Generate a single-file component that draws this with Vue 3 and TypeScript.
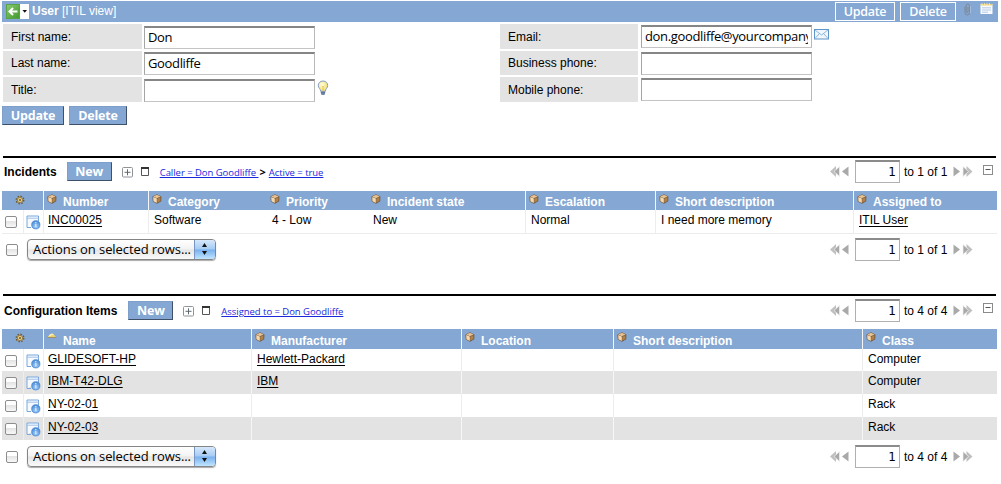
<script setup lang="ts">
interface Column {
  label: string
  icon: string
  divided: boolean
}

interface Cell {
  text: string
  link?: boolean
}

interface RelatedList {
  key: string
  title: string
  filters: string[]
  range: string
  columns: Column[]
  rows: Cell[][]
}

interface Field {
  label: string
  value: string
  icon?: string
}

const fieldColumns: { side: string; fields: Field[] }[] = [
  {
    side: 'left',
    fields: [
      { label: 'First name:', value: 'Don' },
      { label: 'Last name:', value: 'Goodliffe' },
      { label: 'Title:', value: '', icon: 'bulb' },
    ],
  },
  {
    side: 'right',
    fields: [
      { label: 'Email:', value: 'don.goodliffe@yourcompany', icon: 'mail' },
      { label: 'Business phone:', value: '' },
      { label: 'Mobile phone:', value: '' },
    ],
  },
]

const col = (label: string, divided = true, icon = 'cube'): Column => ({ label, icon, divided })

const lists: RelatedList[] = [
  {
    key: 'incidents',
    title: 'Incidents',
    filters: ['Caller = Don Goodliffe', 'Active = true'],
    range: 'to 1 of 1',
    columns: [
      col('Number'),
      col('Category'),
      col('Priority', false),
      col('Incident state', false),
      col('Escalation'),
      col('Short description'),
      col('Assigned to'),
    ],
    rows: [
      [
        { text: 'INC00025', link: true },
        { text: 'Software' },
        { text: '4 - Low' },
        { text: 'New' },
        { text: 'Normal' },
        { text: 'I need more memory' },
        { text: 'ITIL User', link: true },
      ],
    ],
  },
  {
    key: 'config',
    title: 'Configuration Items',
    filters: ['Assigned to = Don Goodliffe'],
    range: 'to 4 of 4',
    columns: [
      col('Name', true, 'sort'),
      col('Manufacturer'),
      col('Location'),
      col('Short description'),
      col('Class'),
    ],
    rows: [
      ['GLIDESOFT-HP', 'Hewlett-Packard', 'Computer'],
      ['IBM-T42-DLG', 'IBM', 'Computer'],
      ['NY-02-01', '', 'Rack'],
      ['NY-02-03', '', 'Rack'],
    ].map(([name, maker, kind]) => [
      { text: name, link: true },
      { text: maker, link: true },
      { text: '' },
      { text: '' },
      { text: kind },
    ]),
  },
]
</script>

<template>
  <svg class="defs" width="0" height="0" aria-hidden="true">
    <defs>
      <linearGradient id="green" x1="0" y1="0" x2="1" y2="1">
        <stop offset="0" stop-color="#8ccb73" />
        <stop offset="1" stop-color="#3f9829" />
      </linearGradient>
      <radialGradient id="glow" cx=".4" cy=".35" r=".7">
        <stop offset="0" stop-color="#fffde0" />
        <stop offset="1" stop-color="#f3dc62" />
      </radialGradient>
      <radialGradient id="ball" cx=".5" cy=".7" r=".7">
        <stop offset="0" stop-color="#a4d0f8" />
        <stop offset="1" stop-color="#4486d6" />
      </radialGradient>
    </defs>
    <symbol id="cube" viewBox="0 0 10 10">
      <path d="M5 .3 9.4 2.4 9.2 7.3 5 9.7 .8 7.5 .5 2.5Z" fill="#6b5540" />
      <path d="M5 .7 8.7 2.4 4.8 4.3 1.1 2.6Z" fill="#e6c091" />
      <path d="M1.2 3 4.8 4.6V9L1.4 7.2Z" fill="#f5d8ad" />
      <path d="M5.2 4.7 8.5 3.1V7L5.2 8.8Z" fill="#b08049" />
    </symbol>
    <symbol id="sort" viewBox="0 0 10 10">
      <path d="M.6 5.2Q4.8-1.1 9.2 5.2Z" fill="#f2d774" />
      <path d="M1.2 4.4Q4.6-.4 7 2.5Q4 2.4 2.8 4.6Z" fill="#fff3bb" />
      <path d="M.5 5.4H9.3" stroke="#9f8445" stroke-width=".8" />
    </symbol>
    <symbol id="gear" viewBox="0 0 10 10">
      <circle cx="5" cy="5" r="3.7" fill="none" stroke="#6f5b2d" stroke-width="1.5" stroke-dasharray="1.5 1.406" />
      <circle cx="5" cy="5" r="2.7" fill="#e3c67f" stroke="#8b7037" stroke-width=".8" />
      <circle cx="5" cy="5" r="1" fill="#6d5a35" />
    </symbol>
    <symbol id="record" viewBox="0 0 15 15">
      <path d="M1 12.5V1H12.5V6" fill="#f6faff" stroke="#79a6dc" />
      <path d="M1 3.2H12.5" stroke="#9dc0e8" />
      <path d="M1 12.5H5" stroke="#79a6dc" />
      <circle cx="9.8" cy="9.8" r="4.1" fill="url(#ball)" stroke="#4685d0" stroke-width=".8" />
      <path d="M9.8 7V8.2M9.8 9V12.2" stroke="#d5eaff" stroke-width="1.2" />
    </symbol>
    <symbol id="bulb" viewBox="0 0 12 16">
      <path d="M6 1C3 1 1.3 3.1 1.3 5.5C1.3 8 3.5 8.7 3.7 11.3H8.3C8.5 8.7 10.7 8 10.7 5.5C10.7 3.1 9 1 6 1Z" fill="url(#glow)" stroke="#849dc7" />
      <path d="M4.8 6.2 6 7.2 7.2 6.2M6 7.2V10.5" fill="none" stroke="#e3bd55" stroke-width=".8" />
      <path d="M3.9 11.2H8.1V13.7L7 15H5L3.9 13.7Z" fill="#8799b4" />
      <path d="M3.8 12.4H8.2M4.2 14H7.8" stroke="#4b6288" stroke-width=".7" />
    </symbol>
    <symbol id="mail" viewBox="0 0 15 11">
      <rect x=".5" y=".5" width="14" height="9.5" fill="#eff6fd" stroke="#5f94c9" />
      <path d="M1 1 7.5 6 14 1M1 9.5 5.3 4.7M14 9.5 9.7 4.7" fill="none" stroke="#82afd9" stroke-width=".9" />
    </symbol>
    <symbol id="prev" viewBox="0 0 20 11">
      <path d="M6 0V11L0 5.5Z" fill="#c0c0c0" />
      <path d="M9.5 .5V10.5L4 5.5Z" fill="#a9a9a9" stroke="#f2f2f2" stroke-width=".7" />
      <path d="M18.5 .5V10.5L12 5.5Z" fill="#a9a9a9" />
    </symbol>
    <symbol id="next" viewBox="0 0 20 11">
      <path d="M.5 .5V10.5L7 5.5Z" fill="#a9a9a9" />
      <path d="M13.5 0V11L19.5 5.5Z" fill="#c0c0c0" />
      <path d="M10 .5V10.5L15.5 5.5Z" fill="#a9a9a9" stroke="#f2f2f2" stroke-width=".7" />
    </symbol>
  </svg>

  <main class="page">
    <header class="bar">
      <svg class="back" width="23" height="15" viewBox="0 0 23 15">
        <rect width="23" height="15" fill="#fff" />
        <rect x=".5" y=".5" width="13" height="14" fill="url(#green)" stroke="#58a445" />
        <path d="M11.5 7.5H4M7 4 3.5 7.5 7 11" fill="none" stroke="#fff" stroke-width="2" />
        <path d="M16.5 6H21L18.75 8.7Z" fill="#111" />
      </svg>
      <h1>User <span>[ITIL view]</span></h1>
      <div class="bar-tools">
        <button class="outline update">Update</button>
        <button class="outline delete">Delete</button>
        <svg class="clip" width="9" height="13" viewBox="0 0 9 13">
          <path d="M2 3.5V9.5Q2.1 12 4.3 12T6.5 9.5V3Q6.4 1 4.7 1T3.2 3V8.5Q3.3 9.5 4.2 9.5T5 8.5V4" fill="none" stroke="#7d8896" />
          <path d="M7.4 3V10" stroke="#b7c9df" stroke-width=".7" />
        </svg>
        <svg class="note" width="13" height="12" viewBox="0 0 13 12">
          <rect x=".5" y="1" width="12" height="10" fill="#f7fbff" />
          <path d="M.5 1.7H12.5" stroke="#e8cf7a" stroke-width="1.5" />
          <path d="M2 0V2.5M4.5 0V2.5M7 0V2.5M9.5 0V2.5" stroke="#fff1ae" stroke-width=".7" />
          <path d="M2 4.8H11M2 7H11M2 9.2H8" stroke="#a5bddd" stroke-width=".8" />
        </svg>
      </div>
    </header>

    <form class="fields" @submit.prevent>
      <div v-for="group in fieldColumns" :key="group.side" class="group" :class="group.side">
        <div v-for="field in group.fields" :key="field.label" class="field">
          <label>{{ field.label }}</label>
          <div class="input lucida"><span>{{ field.value }}</span></div>
          <svg v-if="field.icon" :class="field.icon"><use :href="'#' + field.icon" /></svg>
        </div>
      </div>
    </form>
    <div class="form-actions">
      <button class="solid update">Update</button>
      <button class="solid delete">Delete</button>
    </div>

    <section v-for="list in lists" :key="list.key" class="list" :class="list.key">
      <div class="list-head">
        <h2>{{ list.title }}</h2>
        <button class="solid new">New</button>
        <svg class="expand" width="11" height="11" viewBox="0 0 11 11">
          <rect x=".5" y=".5" width="10" height="9.5" rx="1" fill="#fff" stroke="#8f9499" />
          <path d="M2.5 5.3H8.5M5.5 2.3V8.3" stroke="#5e6872" />
        </svg>
        <svg class="window" width="8" height="9" viewBox="0 0 8 9">
          <path d="M.5 1V8.5H7.5V1" fill="#fff" stroke="#555" />
          <path d="M0 1H8" stroke="#333" stroke-width="2" />
        </svg>
        <div class="crumbs lucida">
          <template v-for="(filter, i) in list.filters" :key="filter">
            <b v-if="i > 0">&gt;</b><a>{{ filter }}<template v-if="i < list.filters.length - 1">&nbsp;</template></a>
          </template>
        </div>
        <div class="pager">
          <svg width="20" height="11"><use href="#prev" /></svg>
          <div class="page-no">1</div>
          <span>{{ list.range }}</span>
          <svg width="20" height="11"><use href="#next" /></svg>
        </div>
        <svg class="collapse" width="10" height="10" viewBox="0 0 10 10">
          <rect x=".5" y=".5" width="9" height="9" fill="#fff" stroke="#8b8b8b" />
          <path d="M2.5 4.5H7.5" stroke="#555" />
        </svg>
      </div>

      <div class="table">
        <div class="tr th">
          <div class="gear"><svg width="10" height="10"><use href="#gear" /></svg></div>
          <div v-for="column in list.columns" :key="column.label" class="cell" :class="{ divided: column.divided }">
            <svg width="10" height="10"><use :href="'#' + column.icon" /></svg>
            <span>{{ column.label }}</span>
          </div>
        </div>
        <div v-for="(row, r) in list.rows" :key="r" class="tr td">
          <div class="pick"><i class="check"></i></div>
          <div class="open"><svg width="15" height="15"><use href="#record" /></svg></div>
          <div v-for="(cell, c) in row" :key="c" class="cell" :class="{ divided: list.columns[c].divided, first: c === 0 }">
            <span :class="{ link: cell.link && cell.text }">{{ cell.text }}</span>
          </div>
        </div>
      </div>

      <div class="list-foot">
        <i class="check"></i>
        <div class="select lucida">
          <span>Actions on selected rows...</span>
          <div class="arrows">
            <svg width="7" height="12" viewBox="0 0 7 12">
              <path d="M3.5 0 6 4H1ZM3.5 12 6 8H1Z" fill="#111" />
            </svg>
          </div>
        </div>
        <div class="pager">
          <svg width="20" height="11"><use href="#prev" /></svg>
          <div class="page-no">1</div>
          <span>{{ list.range }}</span>
          <svg width="20" height="11"><use href="#next" /></svg>
        </div>
      </div>
    </section>
  </main>
</template>

<style>
body {
  margin: 0;
  background: #fff;
}
</style>

<style scoped>
.defs {
  position: absolute;
}
.page,
.page * {
  box-sizing: border-box;
}
.page {
  width: 1001px;
  height: 484px;
  padding-top: 1px;
  overflow: hidden;
  color: #000;
  font: 12px/14px 'Liberation Sans', Arial, sans-serif;
}
.page svg {
  display: block;
  flex: none;
}
.lucida,
button {
  font-family: 'Open Sans', 'Noto Sans', sans-serif;
}
h1,
h2 {
  margin: 0;
  font-size: 12px;
  line-height: 14px;
  font-weight: bold;
}
button {
  flex: none;
  margin: 0;
  padding: 0;
  color: #fff;
  font-size: 12.5px;
  line-height: 15px;
  letter-spacing: -0.2px;
  background: #84a7d3;
}

/* title bar */
.bar {
  display: flex;
  width: 996px;
  height: 21px;
  margin-left: 2px;
  background: #84a7d3;
}
.back {
  margin: 3px 0 0 4px;
}
h1 {
  margin: 3px 0 0 3px;
  color: #fff;
}
h1 span {
  font-weight: normal;
}
.bar-tools {
  display: flex;
  margin-left: auto;
}
.outline {
  height: 19px;
  margin-top: 1px;
  border: 1px solid #fff;
  font-size: 12.5px;
  letter-spacing: -0.3px;
  font-weight: 600;
}
.outline.update {
  width: 60px;
  margin-right: 5px;
}
.outline.delete {
  width: 56px;
}
.clip {
  margin: 2px 0 0 7px;
}
.note {
  margin: 2px 5px 0 8px;
}

/* form */
.fields {
  display: flex;
  height: 80px;
  margin: 2px 0 0 3px;
}
.group {
  display: flex;
  flex-direction: column;
  gap: 2px;
  width: 497px;
}
.field {
  display: flex;
  height: 25px;
}
.field:nth-child(2) {
  height: 24px;
}
.field label {
  width: 139px;
  padding: 6px 0 0 8px;
  background: #e3e3e3;
}
.field:nth-child(2) label {
  padding-top: 5px;
}
.right .field label {
  width: 138px;
}
.input {
  width: 171px;
  height: 23px;
  margin: 2px 0 0 2px;
  padding: 0 3px;
  border: 1px solid #a5a5a5;
  border-top: 2px solid #868686;
  border-right-color: #b8b8b8;
  border-bottom-color: #c4c4c4;
  background: #fff;
  font-size: 13px;
  line-height: 19px;
  letter-spacing: -0.35px;
}
.field:nth-child(2) .input {
  margin-top: 1px;
}
.input span {
  display: block;
  overflow: hidden;
  white-space: nowrap;
}
.right .input {
  margin: 1px 0 0 3px;
}
.bulb {
  width: 12px;
  height: 16px;
  margin: 3px 0 0 2px;
}
.mail {
  width: 15px;
  height: 11px;
  margin: 5px 0 0 2px;
}
.form-actions {
  display: flex;
  gap: 5px;
  margin: 2px 0 0 2px;
}
.solid {
  height: 19px;
  border: 1px solid #7d9fca;
  border-right-color: #3f5168;
  border-bottom-color: #3f5168;
  font-weight: bold;
}
.solid.update {
  width: 62px;
}
.solid.delete {
  width: 58px;
}
.solid.new {
  width: 45px;
}

/* related lists */
.list {
  height: 138px;
}
.incidents {
  margin-top: 31px;
}
.list-head {
  display: flex;
  width: 993px;
  height: 35px;
  margin-left: 3px;
  border-top: 2px solid #000;
}
.config .list-head {
  padding-top: 1px;
}
h2 {
  margin: 7px 0 0 1px;
  white-space: nowrap;
}
.new {
  margin: 4px 0 0 10px;
}
.config .new {
  margin-left: 11px;
}
.expand {
  margin: 9px 0 0 10px;
}
.window {
  margin: 9px 0 0 8px;
}
.crumbs {
  display: flex;
  margin: 8px 0 0 11px;
  color: #1a28dc;
  font-size: 9.5px;
  letter-spacing: -0.04px;
  white-space: nowrap;
}
.crumbs a {
  text-decoration: underline;
}
.crumbs b {
  margin: -1px 3px 0 1px;
  color: #000;
  font-size: 11px;
}
.pager {
  display: flex;
  margin-left: auto;
  white-space: nowrap;
}
.pager svg {
  margin-top: 8px;
}
.pager span {
  width: 44px;
  margin: 7px 5px 0 4px;
}
.page-no {
  width: 45px;
  height: 23px;
  margin: 2px 0 0 5px;
  padding-right: 3px;
  border: 1px solid #b0b0b0;
  border-top: 2px solid #8b8b8b;
  font: 12px/20px 'DejaVu Sans', sans-serif;
  text-align: right;
}
.collapse {
  margin: 7px 3px 0 10px;
}
.config .collapse {
  margin-top: 6px;
}
.table {
  width: 995px;
  margin-left: 2px;
}
.tr {
  display: grid;
}
.incidents .tr {
  grid-template-columns: 21px 20px 105px 118px 101px 158px 130px 198px 144px;
}
.config .tr {
  grid-template-columns: 21px 20px 208px 210px 152px 249px 135px;
}
.th {
  height: 19px;
  background: #84a7d3;
  color: #fff;
  font-weight: bold;
}
.config .th {
  height: 20px;
}
.gear {
  grid-column: span 2;
  padding: 4px 0 0 13px;
}
.th .cell {
  display: flex;
  padding-left: 4px;
}
.th .cell.divided {
  padding-left: 3px;
}
.th .cell svg {
  margin-top: 3px;
}
.th .cell span {
  margin: 4px 0 0 6px;
  white-space: nowrap;
}
.config .th .cell span {
  margin-top: 5px;
}
.cell.divided {
  border-left: 1px solid #f4f6f9;
}
.td {
  height: 24px;
  border-bottom: 1px solid #ececec;
}
.td .cell {
  padding: 3px 0 0 6px;
}
.td .cell.divided {
  padding-left: 5px;
  border-left-color: #ededed;
}
.td .cell.first {
  padding-left: 4px;
}
.config .td {
  height: 23px;
  border-bottom: 0;
}
.config .td:nth-child(2) {
  height: 22px;
}
.config .td:nth-child(odd) {
  background: #e3e3e3;
}
.config .td:nth-child(odd) .cell.divided {
  border-left-color: #f6f6f6;
}
.link {
  text-decoration: underline;
  text-underline-offset: 2px;
}
.check {
  display: block;
  flex: none;
  width: 12px;
  height: 12px;
  border: 1px solid #8d8d8d;
  border-radius: 2px;
  background: linear-gradient(#fff 0 35%, #e4e4e4 45%, #f8f8f8);
}
.pick {
  padding: 6px 0 0 3px;
}
.open {
  padding: 5px 0 0 2px;
  border-left: 1px solid #ededed;
}
.list-foot {
  display: flex;
  width: 967px;
  height: 30px;
  margin-left: 6px;
}
.config .list-foot {
  padding-top: 1px;
}
.list-foot .pager {
  margin-top: 2px;
}
.list-foot .check {
  margin-top: 10px;
}
.select {
  display: flex;
  width: 189px;
  height: 21px;
  margin: 5px 0 0 9px;
  border: 1px solid #858585;
  border-radius: 4px;
  background: linear-gradient(#fff, #f3f3f3 48%, #e5e5e5 52%, #fafafa);
  box-shadow: 0 1px 1px #aaa;
  overflow: hidden;
  font-size: 13px;
  line-height: 19px;
  letter-spacing: -0.08px;
}
.select span {
  width: 167px;
  padding-left: 5px;
  white-space: nowrap;
}
.arrows {
  width: 21px;
  padding: 3px 0 0 6px;
  border-left: 1px solid #7796c4;
  background: linear-gradient(#d6e8fb, #a6cbf4 48%, #78b0ee 52%, #c0e5ff);
}
</style>
